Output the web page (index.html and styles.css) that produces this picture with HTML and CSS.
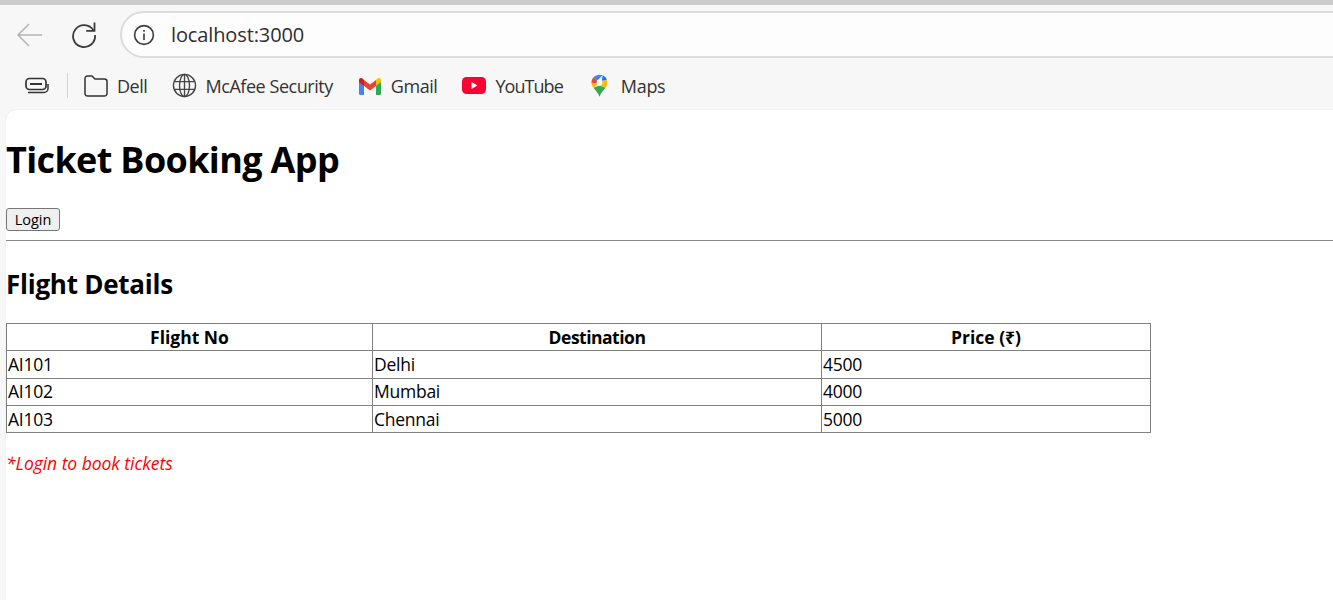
FILE: index.html
```html
<!DOCTYPE html>
<html lang="en">
<head>
    <meta charset="UTF-8">
    <meta name="viewport" content="width=device-width, initial-scale=1.0">
    <title>Ticket Booking App</title>
    <link rel="stylesheet" href="styles.css">
</head>
<body>
  <div class="top-strip"></div>

  <div class="toolbar">
    <button class="nav-btn nav-back" aria-label="Back">
      <svg width="28" height="28" viewBox="0 0 28 28" fill="none" stroke="#b5b5b5" stroke-width="1.6"><path d="M2 14H26M13 3L2 14L13 25"/></svg>
    </button>
    <button class="nav-btn nav-reload" aria-label="Reload">
      <svg width="28" height="28" viewBox="0 0 28 28" fill="none" stroke="#3b3b3b" stroke-width="1.8"><path d="M23.5 9.500A11 11 0 1 0 25 14"/><path d="M24.5 1.500V9.800H16.200"/></svg>
    </button>
    <div class="address">
      <svg class="info-icon" width="22" height="22" viewBox="0 0 22 22" fill="none" stroke="#3b3b3b" stroke-width="1.6"><circle cx="11" cy="11" r="9.4"/><path d="M11 9.5V16M11 6V7.8"/></svg>
      <span class="url">localhost:3000</span>
    </div>
  </div>

  <div class="bookmarks">
    <svg class="tabs-icon" width="24" height="20" viewBox="0 0 24 20" fill="none" stroke="#333" stroke-width="1.7"><rect x="1" y="2.5" width="20" height="11" rx="3.5"/><path d="M5 8H17" stroke-width="2"/><path d="M3 16.5H19A4 4 0 0 0 23 12.5V8" stroke-width="1.5"/></svg>
    <span class="divider"></span>
    <a class="mark mark-dell">
      <svg width="24" height="22" viewBox="0 0 24 22" fill="none" stroke="#333" stroke-width="1.5"><path d="M1 5V3.5A2.5 2.5 0 0 1 3.5 1H8L11 4H20.5A2.5 2.5 0 0 1 23 6.5V18.5A2.5 2.5 0 0 1 20.5 21H3.5A2.5 2.5 0 0 1 1 18.5V5Z"/></svg>
      Dell
    </a>
    <a class="mark mark-mcafee">
      <svg width="25" height="25" viewBox="0 0 26 26" fill="none" stroke="#444" stroke-width="1.4"><circle cx="13" cy="13" r="11.5"/><ellipse cx="13" cy="13" rx="5.2" ry="11.5"/><path d="M13 1.5V24.5M2.4 9H23.6M2.4 17H23.6"/></svg>
      McAfee Security
    </a>
    <a class="mark mark-gmail">
      <svg width="22" height="18" viewBox="0 0 22 18">
        <path d="M0 4V16.5A1.5 1.5 0 0 0 1.500 18H5V8Z" fill="#4285f4"/>
        <path d="M17 8V18H20.500A1.500 1.500 0 0 0 22 16.500V4Z" fill="#34a853"/>
        <path d="M5 9V3L11 7.500L17 3V9L11 13.500Z" fill="#ea4335"/>
        <path d="M0 3V5L5 9V3L3.500 1.500C2 .5 0 1.200 0 3Z" fill="#c5221f"/>
        <path d="M17 3V9L22 5V3C22 1.200 20 .5 18.500 1.500Z" fill="#fbbc04"/>
      </svg>
      Gmail
    </a>
    <a class="mark mark-youtube">
      <svg width="24" height="17" viewBox="0 0 24 17"><rect width="24" height="17" rx="4.500" fill="#ff0033"/><path d="M9.500 5V12L15.500 8.500Z" fill="#fff"/></svg>
      YouTube
    </a>
    <a class="mark mark-maps">
      <svg width="17" height="23" viewBox="0 0 18 24">
        <path d="M9 24C7.500 19.500 4.800 17.500 2.600 14.500L9 12L15.400 14.500C13.200 17.500 10.500 19.500 9 24Z" fill="#34a853"/>
        <path d="M2.600 14.500C1.400 13 .5 11.200 .5 9L6 9.500L6.500 11.500Z" fill="#fbbc04"/>
        <path d="M.5 9C.5 6.800 1.300 4.800 2.700 3.300L6.500 7L6 9.500Z" fill="#ea4335"/>
        <path d="M2.700 3.300C4.200 1.500 6.500 .5 9 .5C10.200 .5 11.300 .7 12.300 1.200L6.500 7Z" fill="#4285f4"/>
        <path d="M12.300 1.200C14.500 2.200 16.200 4.200 17 6.500L11.500 7Z" fill="#1a73e8"/>
        <path d="M17 6.500C17.700 9.500 17 12.300 15.400 14.500L9 12L11.500 7Z" fill="#fbbc04"/>
        <circle cx="9" cy="9" r="3" fill="#fff"/>
      </svg>
      Maps
    </a>
  </div>

  <div class="viewport">
    <main class="page">
      <h1>Ticket Booking App</h1>
      <button class="login-btn">Login</button>
      <hr>
      <h2>Flight Details</h2>
      <table>
        <thead>
          <tr><th class="col-flight">Flight No</th><th class="col-dest">Destination</th><th class="col-price">Price (₹)</th></tr>
        </thead>
        <tbody>
          <tr><td>AI101</td><td>Delhi</td><td>4500</td></tr>
          <tr><td>AI102</td><td>Mumbai</td><td>4000</td></tr>
          <tr><td>AI103</td><td>Chennai</td><td>5000</td></tr>
        </tbody>
      </table>
      <p class="note">*Login to book tickets</p>
    </main>
  </div>
</body>
</html>
```

FILE: styles.css
```css
html, body {
  margin: 0;
  height: 600px;
  overflow: hidden;
}

body {
  display: flex;
  flex-direction: column;
  background: #f7f7f7;
  font-family: "Open Sans", "Noto Sans", sans-serif;
  color: #000;
}

.top-strip {
  height: 5px;
  background: #cccccc;
}

.toolbar {
  height: 59px;
  display: flex;
  align-items: center;
  padding-left: 16px;
  box-sizing: border-box;
}

.nav-btn {
  width: 28px;
  height: 28px;
  padding: 0;
  border: none;
  background: none;
  display: flex;
}

.nav-reload {
  margin-left: 26px;
}

.address {
  margin-left: 22px;
  flex: 1;
  height: 47px;
  margin-right: -40px;
  display: flex;
  align-items: center;
  padding-left: 11px;
  background: #fdfdfd;
  border: 2px solid #dcdcdc;
  border-radius: 24px;
  box-sizing: border-box;
}

.url {
  margin-left: 16px;
  font-size: 20px;
  color: #2e2e2e;
  letter-spacing: -0.12px;
}

.bookmarks {
  height: 45px;
  display: flex;
  align-items: center;
  padding: 0 0 2px 25px;
  box-sizing: border-box;
  font-size: 18px;
  color: #333;
}

.tabs-icon {
  flex: none;
}

.divider {
  width: 1px;
  height: 25px;
  margin: 0 16px 0 18px;
  background: #d4d4d4;
}

.mark {
  display: flex;
  align-items: center;
  gap: 9px;
  margin-right: 25px;
  letter-spacing: -0.45px;
}

.mark-mcafee {
  gap: 8px;
  margin-right: 26px;
}

.mark-gmail {
  gap: 10px;
}

.mark-youtube {
  margin-right: 28px;
  letter-spacing: -0.95px;
}

.mark-maps {
  gap: 13px;
  letter-spacing: -0.3px;
}

.viewport {
  flex: 1;
  padding-left: 6px;
  padding-top: 1px;
}

.page {
  height: 100%;
  background: #fff;
  border-radius: 10px 0 0 0;
  overflow: hidden;
  box-shadow: 0 0 1px #d0d0d0;
}

h1 {
  margin: 26px 0 0;
  font-size: 36px;
  line-height: 48px;
  font-weight: 700;
  letter-spacing: -0.65px;
}

.login-btn {
  display: block;
  margin-top: 24px;
  width: 54px;
  height: 23px;
  padding: 0;
  font-family: "Open Sans", sans-serif;
  font-size: 14.5px;
  letter-spacing: 0;
  color: #000;
  background: #efefef;
  border: 1px solid #767676;
  border-radius: 3px;
}

hr {
  margin: 9px 0 0;
  border: none;
  border-top: 1px solid #8a8a8a;
  height: 0;
}

h2 {
  margin: 25px 0 0;
  font-size: 26px;
  line-height: 36px;
  font-weight: 700;
  letter-spacing: -0.25px;
}

table {
  margin-top: 21px;
  width: 1145px;
  table-layout: fixed;
  border-collapse: collapse;
  font-size: 17.5px;
  letter-spacing: -0.25px;
}

th, td {
  border: 1px solid #808080;
  padding: 0 1px;
  height: 27.33px;
  line-height: 25px;
  box-sizing: border-box;
}

th {
  font-weight: 700;
  letter-spacing: 0;
}

.col-flight {
  width: 366px;
}

th.col-dest {
  width: 449px;
  letter-spacing: -0.5px;
}

.note {
  margin: 17px 0 0;
  font-size: 17.5px;
  line-height: 26px;
  font-style: italic;
  color: #ff0000;
  letter-spacing: -0.05px;
}
```
